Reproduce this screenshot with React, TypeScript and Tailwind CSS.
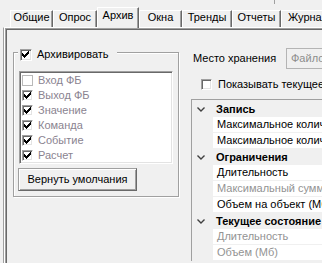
import React from "react";

const tabs = [
  { label: "Общие", w: "w-[43px]" },
  { label: "Опрос", w: "w-[44px]" },
  { label: "Архив", w: "w-[42px]", active: true },
  { label: "Окна", w: "w-[43px]" },
  { label: "Тренды", w: "w-[50px]" },
  { label: "Отчеты", w: "w-[49px]" },
  { label: "Журналы", w: "w-[62px]" },
];

const items = [
  { label: "Вход ФБ", checked: false },
  { label: "Выход ФБ", checked: true },
  { label: "Значение", checked: true },
  { label: "Команда", checked: true },
  { label: "Событие", checked: true },
  { label: "Расчет", checked: true },
];

type Row =
  | { kind: "cat"; label: string }
  | { kind: "prop"; label: string; dim?: boolean };

const rows: Row[] = [
  { kind: "cat", label: "Запись" },
  { kind: "prop", label: "Максимальное количество записей" },
  { kind: "prop", label: "Максимальное количество объектов" },
  { kind: "cat", label: "Ограничения" },
  { kind: "prop", label: "Длительность" },
  { kind: "prop", label: "Максимальный суммарный объем (Мб)", dim: true },
  { kind: "prop", label: "Объем на объект (Мб)" },
  { kind: "cat", label: "Текущее состояние" },
  { kind: "prop", label: "Длительность", dim: true },
  { kind: "prop", label: "Объем (Мб)", dim: true },
];

// classic 7x7 check glyph
function Check() {
  return (
    <svg
      className="absolute left-[1px] top-[1px]"
      width="7"
      height="7"
      viewBox="0 0 7 7"
      shapeRendering="crispEdges"
    >
      <path
        fill="#000"
        d="M6 0h1v1h-1z M5 1h2v1h-2z M0 2h1v1h-1z M4 2h3v1h-3z M0 3h2v1h-2z M3 3h3v1h-3z M0 4h5v1h-5z M1 5h3v1h-3z M2 6h1v1h-1z"
      />
    </svg>
  );
}

function Box({ checked, faint, big }: { checked?: boolean; faint?: boolean; big?: boolean }) {
  if (faint) {
    return <span className="relative block size-[11px] shrink-0 border border-[#b9b9b9] bg-white" />;
  }
  return (
    <span
      className={
        (big ? "size-[12px] " : "size-[11px] ") +
        "relative block shrink-0 border border-t-[#a0a0a0] border-l-[#a0a0a0] border-r-white border-b-white bg-white shadow-[inset_1px_1px_0_#696969,inset_-1px_-1px_0_#e3e3e3]"
      }
    >
      {checked && <Check />}
    </span>
  );
}

function Chevron() {
  return (
    <svg width="8" height="5" viewBox="0 0 8 5">
      <path d="M0.5 0.5 L4 4 L7.5 0.5" fill="none" stroke="#404040" strokeWidth="1.4" />
    </svg>
  );
}

export default function App() {
  return (
    <div className="relative flex h-[263px] w-[322px] flex-col overflow-hidden bg-[#f0f0f0] font-['Liberation_Sans',Arial,sans-serif] text-[11px] leading-[13px] text-black">
      <div className="absolute left-[274px] top-0 h-[4px] w-px bg-[#a0a0a0]" />

      {/* === Tabs === */}
      <div className="flex h-[27px] shrink-0 items-end pl-[10px]">
        {tabs.map((t) =>
          t.active ? (
            <div
              key={t.label}
              className={`${t.w} relative z-10 mb-[-1px] flex h-[21px] shrink-0 justify-center border-l border-t border-r border-l-white border-t-white border-r-[#696969] bg-[#f0f0f0] pt-[1px] shadow-[inset_-1px_0_0_#a0a0a0] whitespace-nowrap`}
            >
              {t.label}
            </div>
          ) : (
            <div
              key={t.label}
              className={`${t.w} flex h-[17px] shrink-0 justify-center border-l border-t border-r border-l-white border-t-white border-r-[#696969] shadow-[inset_-1px_0_0_#a0a0a0] whitespace-nowrap`}
            >
              {t.label}
            </div>
          )
        )}
      </div>

      {/* === Tab page === */}
      <div className="ml-[3px] flex flex-1 flex-col border-l border-t border-l-[#a0a0a0] border-t-white pl-[1px] shadow-[inset_1px_0_0_#fff]">
        <div className="flex flex-1 border-l border-t border-[#a0a0a0] shadow-[inset_1px_1px_0_#696969]">
          {/* Archive group */}
          <div className="relative ml-[7px] mt-[23px] h-[145px] w-[166px] shrink-0 border border-[#a0a0a0] shadow-[inset_1px_1px_0_#fff,1px_1px_0_#fff]">
            <div className="absolute left-[4px] top-[-5px] flex h-[13px] items-center bg-[#f0f0f0] pl-[2px] pr-[8px]">
              <Box checked big />
              <span className="ml-[5px] whitespace-nowrap">Архивировать</span>
            </div>

            <div className="ml-[5px] mt-[18px] h-[93px] w-[154px] border border-t-[#a0a0a0] border-l-[#a0a0a0] border-r-white border-b-white bg-white pt-[1px] pl-[2px] shadow-[inset_1px_1px_0_#696969,inset_-1px_-1px_0_#e3e3e3]">
              {items.map((it) => (
                <div key={it.label} className="flex h-[15px] items-center">
                  <Box checked={it.checked} faint={!it.checked} />
                  <span className="ml-[5px] whitespace-nowrap text-[#8a8390]">{it.label}</span>
                </div>
              ))}
            </div>

            <button className="ml-[4px] mt-[4px] flex h-[23px] w-[119px] items-center justify-center border border-t-[#a0a0a0] border-l-[#a0a0a0] border-r-[#696969] border-b-[#696969] bg-[#f0f0f0] shadow-[inset_1px_1px_0_#fff,inset_-1px_-1px_0_#a0a0a0] whitespace-nowrap">
              Вернуть умолчания
            </button>
          </div>

          {/* Storage settings */}
          <div className="ml-[12px] flex flex-col">
            <div className="mt-[19px] flex h-[21px] items-center">
              <span className="w-[95px] shrink-0 pl-[2px] whitespace-nowrap">Место хранения</span>
              <div className="flex h-[21px] w-[120px] items-center border border-[#b4b4b4] pl-[4px] text-[#8d8d8d] whitespace-nowrap">
                Файловая система
              </div>
            </div>

            <div className="mt-[9px] flex h-[13px] items-center pl-[10px]">
              <Box />
              <span className="ml-[6px] whitespace-nowrap">Показывать текущее состояние</span>
            </div>

            <div className="mt-[8px] w-[220px] border-l border-t border-[#a0a0a0] bg-[#f0f0f0] pt-[1px]">
              {rows.map((r, i) =>
                r.kind === "cat" ? (
                  <div key={i} className="flex h-[16px] items-center">
                    <div className="flex w-[21px] shrink-0 pl-[5px]">
                      <Chevron />
                    </div>
                    <span className="pl-[3px] font-bold whitespace-nowrap">{r.label}</span>
                  </div>
                ) : (
                  <div key={i} className="flex h-[16px]">
                    <div className="w-[21px] shrink-0" />
                    <div
                      className={`flex flex-1 items-center border-b border-[#f0f0f0] bg-white pl-[4px] whitespace-nowrap ${
                        r.dim ? "text-[#939393]" : "text-black"
                      }`}
                    >
                      {r.label}
                    </div>
                  </div>
                )
              )}
            </div>
          </div>
        </div>
      </div>
    </div>
  );
}
